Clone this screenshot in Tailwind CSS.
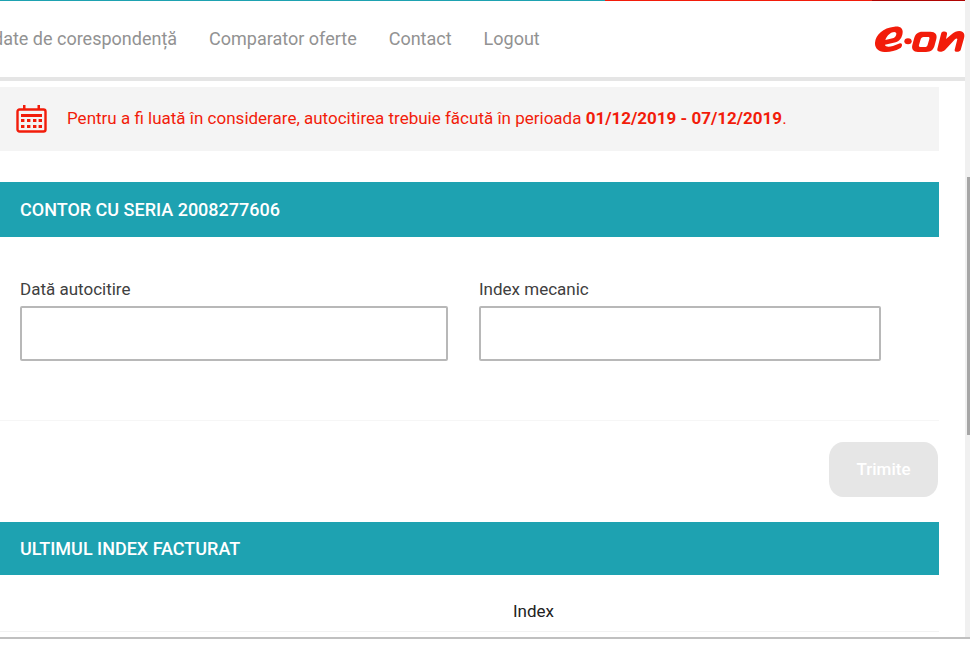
<!DOCTYPE html>
<html lang="ro">
<head>
  <meta charset="UTF-8" />
  <meta name="viewport" content="width=device-width, initial-scale=1.0"/>
  <title>E.ON Myline - Autocitire</title>
  <script src="https://cdn.jsdelivr.net/npm/@tailwindcss/browser@4"></script>
</head>
<body class="bg-white font-['Roboto',sans-serif] text-[17px] text-[#404040]">

  <div class="flex min-h-screen flex-col pb-1.5">
    <div class="flex grow overflow-hidden border-b-2 border-[#c0c0c0]">

      <div class="flex min-w-0 grow flex-col">
        <!-- Brand stripe -->
        <div class="flex h-px">
          <div class="grow bg-[#1ea2b1]"></div>
          <div class="w-[267px] bg-[#f21c0a]"></div>
          <div class="w-[93px] bg-[#b00402]"></div>
        </div>

        <!-- Header -->
        <header class="flex h-20 items-center justify-between border-b-4 border-[#e5e5e5]">
          <nav class="-ml-[7px] flex gap-8 whitespace-nowrap text-lg text-[#929292]">
            <a href="#">date de corespondență</a>
            <a href="#">Comparator oferte</a>
            <a href="#">Contact</a>
            <a href="#">Logout</a>
          </nav>
          <a href="#" aria-label="E.ON">
            <svg class="h-[27px] w-[90px]" viewBox="0 0 270 81" fill="#f21c0a">
              <path fill-rule="evenodd" d="M58 2 C75 -1 84 7 83 19 C82 35 74 45 62 49 L30 56 C31 63 41 63 54 60 L75 52 C83 50 83 62 75 67 C60 76 43 79 28 78 C9 77 -1 66 0 50 C2 26 24 5 58 2 Z M31 42 L56 36 C62 33 66 23 63 20 C55 14 37 25 31 42 Z"/>
              <ellipse cx="99" cy="46" rx="11" ry="9"/>
              <path fill-rule="evenodd" d="M142 17 H166 C181 17 187 26 184 39 L179 58 C176 71 168 78 153 78 H129 C115 78 109 69 112 57 L117 38 C121 23 129 17 142 17 Z M146 33 C141 33 138 36 137 40 L132 57 C131 61 132 63 136 63 H149 C154 63 157 60 158 56 L163 39 C164 35 163 33 159 33 Z"/>
              <path d="M203 17 C210 15 218 17 216 25 L213 39 L231 24 C241 15 255 13 263 18 C269 22 269 30 267 37 L257 72 C255 79 237 80 239 71 L247 40 C247 36 243 37 240 40 L210 72 C203 79 184 80 187 69 L198 24 C199 20 200 18 203 17 Z"/>
            </svg>
          </a>
        </header>

        <main class="pr-[26px] pt-1.5">
          <!-- Notice -->
          <div class="flex h-16 items-center gap-5 bg-[#f4f4f4] pl-4 text-[#f21c0a]">
            <svg class="h-7 w-[31px] shrink-0" viewBox="0 0 31 28" fill="currentColor">
              <rect x="1.5" y="4.5" width="28" height="22" rx="2" fill="none" stroke="currentColor" stroke-width="2.4"/>
              <path d="M7 0h2.5v4H7z M21.5 0H24v4h-2.5z M5 9h21v3H5z"/>
              <path d="M5 14h3.4v3H5z M11 14h3.4v3H11z M17 14h3.4v3H17z M22.6 14H26v3h-3.4z M5 20h3.4v3H5z M11 20h3.4v3H11z M17 20h3.4v3H17z M22.6 20H26v3h-3.4z"/>
            </svg>
            <p>Pentru a fi luată în considerare, autocitirea trebuie făcută în perioada <b>01/12/2019 - 07/12/2019</b>.</p>
          </div>

          <h2 class="mt-[31px] flex h-[55px] items-center bg-[#1ea2b1] pl-5 text-lg font-medium text-white">CONTOR CU SERIA 2008277606</h2>

          <form>
            <div class="grid grid-cols-[428fr_402fr] gap-[31px] pb-[59px] pl-5 pr-[58px] pt-[37px]">
              <div>
                <label for="data" class="block pb-px leading-[31px]">Dată autocitire</label>
                <input type="text" id="data" class="block h-[55px] w-full rounded-xs border-2 border-[#b8b8b8] bg-white px-4">
              </div>
              <div>
                <label for="index" class="block pb-px leading-[31px]">Index mecanic</label>
                <input type="text" id="index" class="block h-[55px] w-full rounded-xs border-2 border-[#b8b8b8] bg-white px-4">
              </div>
            </div>
            <div class="flex justify-end border-t border-[#f6f6f6] py-[21px] pr-px">
              <button type="submit" disabled class="h-[55px] w-[109px] rounded-[14px/16px] bg-[#e6e6e6] font-medium text-white">Trimite</button>
            </div>
          </form>

          <h2 class="mt-1 flex h-[53px] items-center bg-[#1ea2b1] pl-5 text-lg font-medium text-white">ULTIMUL INDEX FACTURAT</h2>

          <table class="w-full table-fixed">
            <thead>
              <tr class="h-14 border-b border-[#f2f2f2]">
                <td class="w-[513px]"></td>
                <th class="pt-[18px] text-left font-normal text-[#222222]">Index</th>
              </tr>
            </thead>
          </table>
        </main>
      </div>

      <!-- Scroll track -->
      <div class="w-[5px] shrink-0 bg-[#f0f0f0] pl-0.5 pt-[177px]">
        <div class="h-[258px] bg-[#a6a6a6]"></div>
      </div>
    </div>
  </div>

</body>
</html>
